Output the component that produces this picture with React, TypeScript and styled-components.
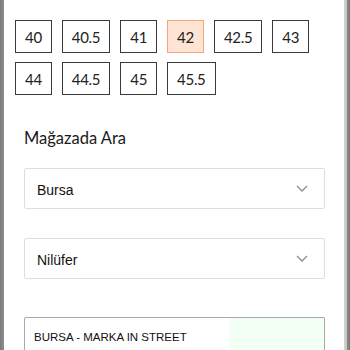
import React from 'react';
import styled, {createGlobalStyle} from 'styled-components';

const GlobalStyle = createGlobalStyle`
    html, body {
        margin: 0;
        padding: 0;
        background: #ffffff;
        overflow: hidden;
    }
`;

const Frame = styled.div`
    display: flex;
    width: 350px;
    height: 350px;
    overflow: hidden;
`;

const LeftEdge = styled.div`
    width: 4px;
    flex-shrink: 0;
    background: linear-gradient(to right, #7a7a7a, #8e8e8e);
`;

const RightEdge = styled.div`
    width: 6px;
    flex-shrink: 0;
    background: linear-gradient(to right, #d4d4d4 0, #c4c4c4 3px, #8a8a8a 3px, #7a7a7a 100%);
`;

const Panel = styled.div`
    flex: 1;
    display: flex;
    flex-direction: column;
    background: #ffffff;
`;

const SizeGrid = styled.div`
    display: flex;
    flex-direction: column;
    gap: 9px;
    padding: 20px 11px 18px;
`;

const SizeRow = styled.div`
    display: flex;
    gap: 10px;
`;

const SizeButton = styled.button<{$active?: boolean}>`
    height: 33px;
    padding: 0 9px;
    border: 1px solid ${({$active}) => ($active ? '#f3a676' : '#3a3a3a')};
    background: ${({$active}) => ($active ? '#fde4d4' : '#ffffff')};
    border-radius: 0;
    font-family: Lato, "Noto Sans", sans-serif;
    font-size: 15px;
    letter-spacing: -0.3px;
    color: #222222;
    cursor: pointer;
`;

const Divider = styled.div`
    height: 2px;
    background: #e2e2e2;
`;

const Section = styled.div`
    display: flex;
    flex-direction: column;
    padding: 15px 19px 0 20px;
`;

const Title = styled.h3`
    margin: 0 0 20px;
    font-family: Lato, "Noto Sans", sans-serif;
    font-weight: 400;
    font-size: 16.5px;
    line-height: 20px;
    color: #1a1a1a;
`;

const Select = styled.div<{$gap: number}>`
    display: flex;
    align-items: center;
    justify-content: space-between;
    height: 41px;
    box-sizing: border-box;
    padding: 2px 16px 0 12px;
    margin-bottom: ${({$gap}) => $gap}px;
    border: 1px solid #dedede;
    border-radius: 2px;
    font-family: "Liberation Sans", Arial, sans-serif;
    font-size: 14px;
    color: #111111;

    svg {
        margin-top: -2px;
    }
`;

const StoreCard = styled.div`
    height: 40px;
    box-sizing: border-box;
    padding: 13px 9px 0;
    border: 1px solid #a8a8a8;
    border-bottom: none;
    border-radius: 2px 2px 0 0;
    background: linear-gradient(to right, #ffffff 0, #ffffff 205px, #f1fff4 205px);
    font-family: "Liberation Sans", Arial, sans-serif;
    font-size: 11.5px;
    color: #111111;
`;

const Chevron = () => (
    <svg width="12" height="7" viewBox="0 0 12 7" fill="none">
        <polyline points="1,1 6,6 11,1" stroke="#8c8c8c" strokeWidth="1.3" />
    </svg>
);

const sizeRows = [
    ['40', '40.5', '41', '42', '42.5', '43'],
    ['44', '44.5', '45', '45.5'],
];

export default function App() {
    return (
        <Frame>
            <GlobalStyle />
            <LeftEdge />
            <Panel>
                <SizeGrid>
                    {sizeRows.map((row, i) => (
                        <SizeRow key={i}>
                            {row.map(size => (
                                <SizeButton key={size} $active={size === '42'}>
                                    {size}
                                </SizeButton>
                            ))}
                        </SizeRow>
                    ))}
                </SizeGrid>
                <Divider />
                <Section>
                    <Title>Mağazada Ara</Title>
                    <Select $gap={29}>
                        <span>Bursa</span>
                        <Chevron />
                    </Select>
                    <Select $gap={38}>
                        <span>Nilüfer</span>
                        <Chevron />
                    </Select>
                    <StoreCard>BURSA - MARKA IN STREET</StoreCard>
                </Section>
            </Panel>
            <RightEdge />
        </Frame>
    );
}
